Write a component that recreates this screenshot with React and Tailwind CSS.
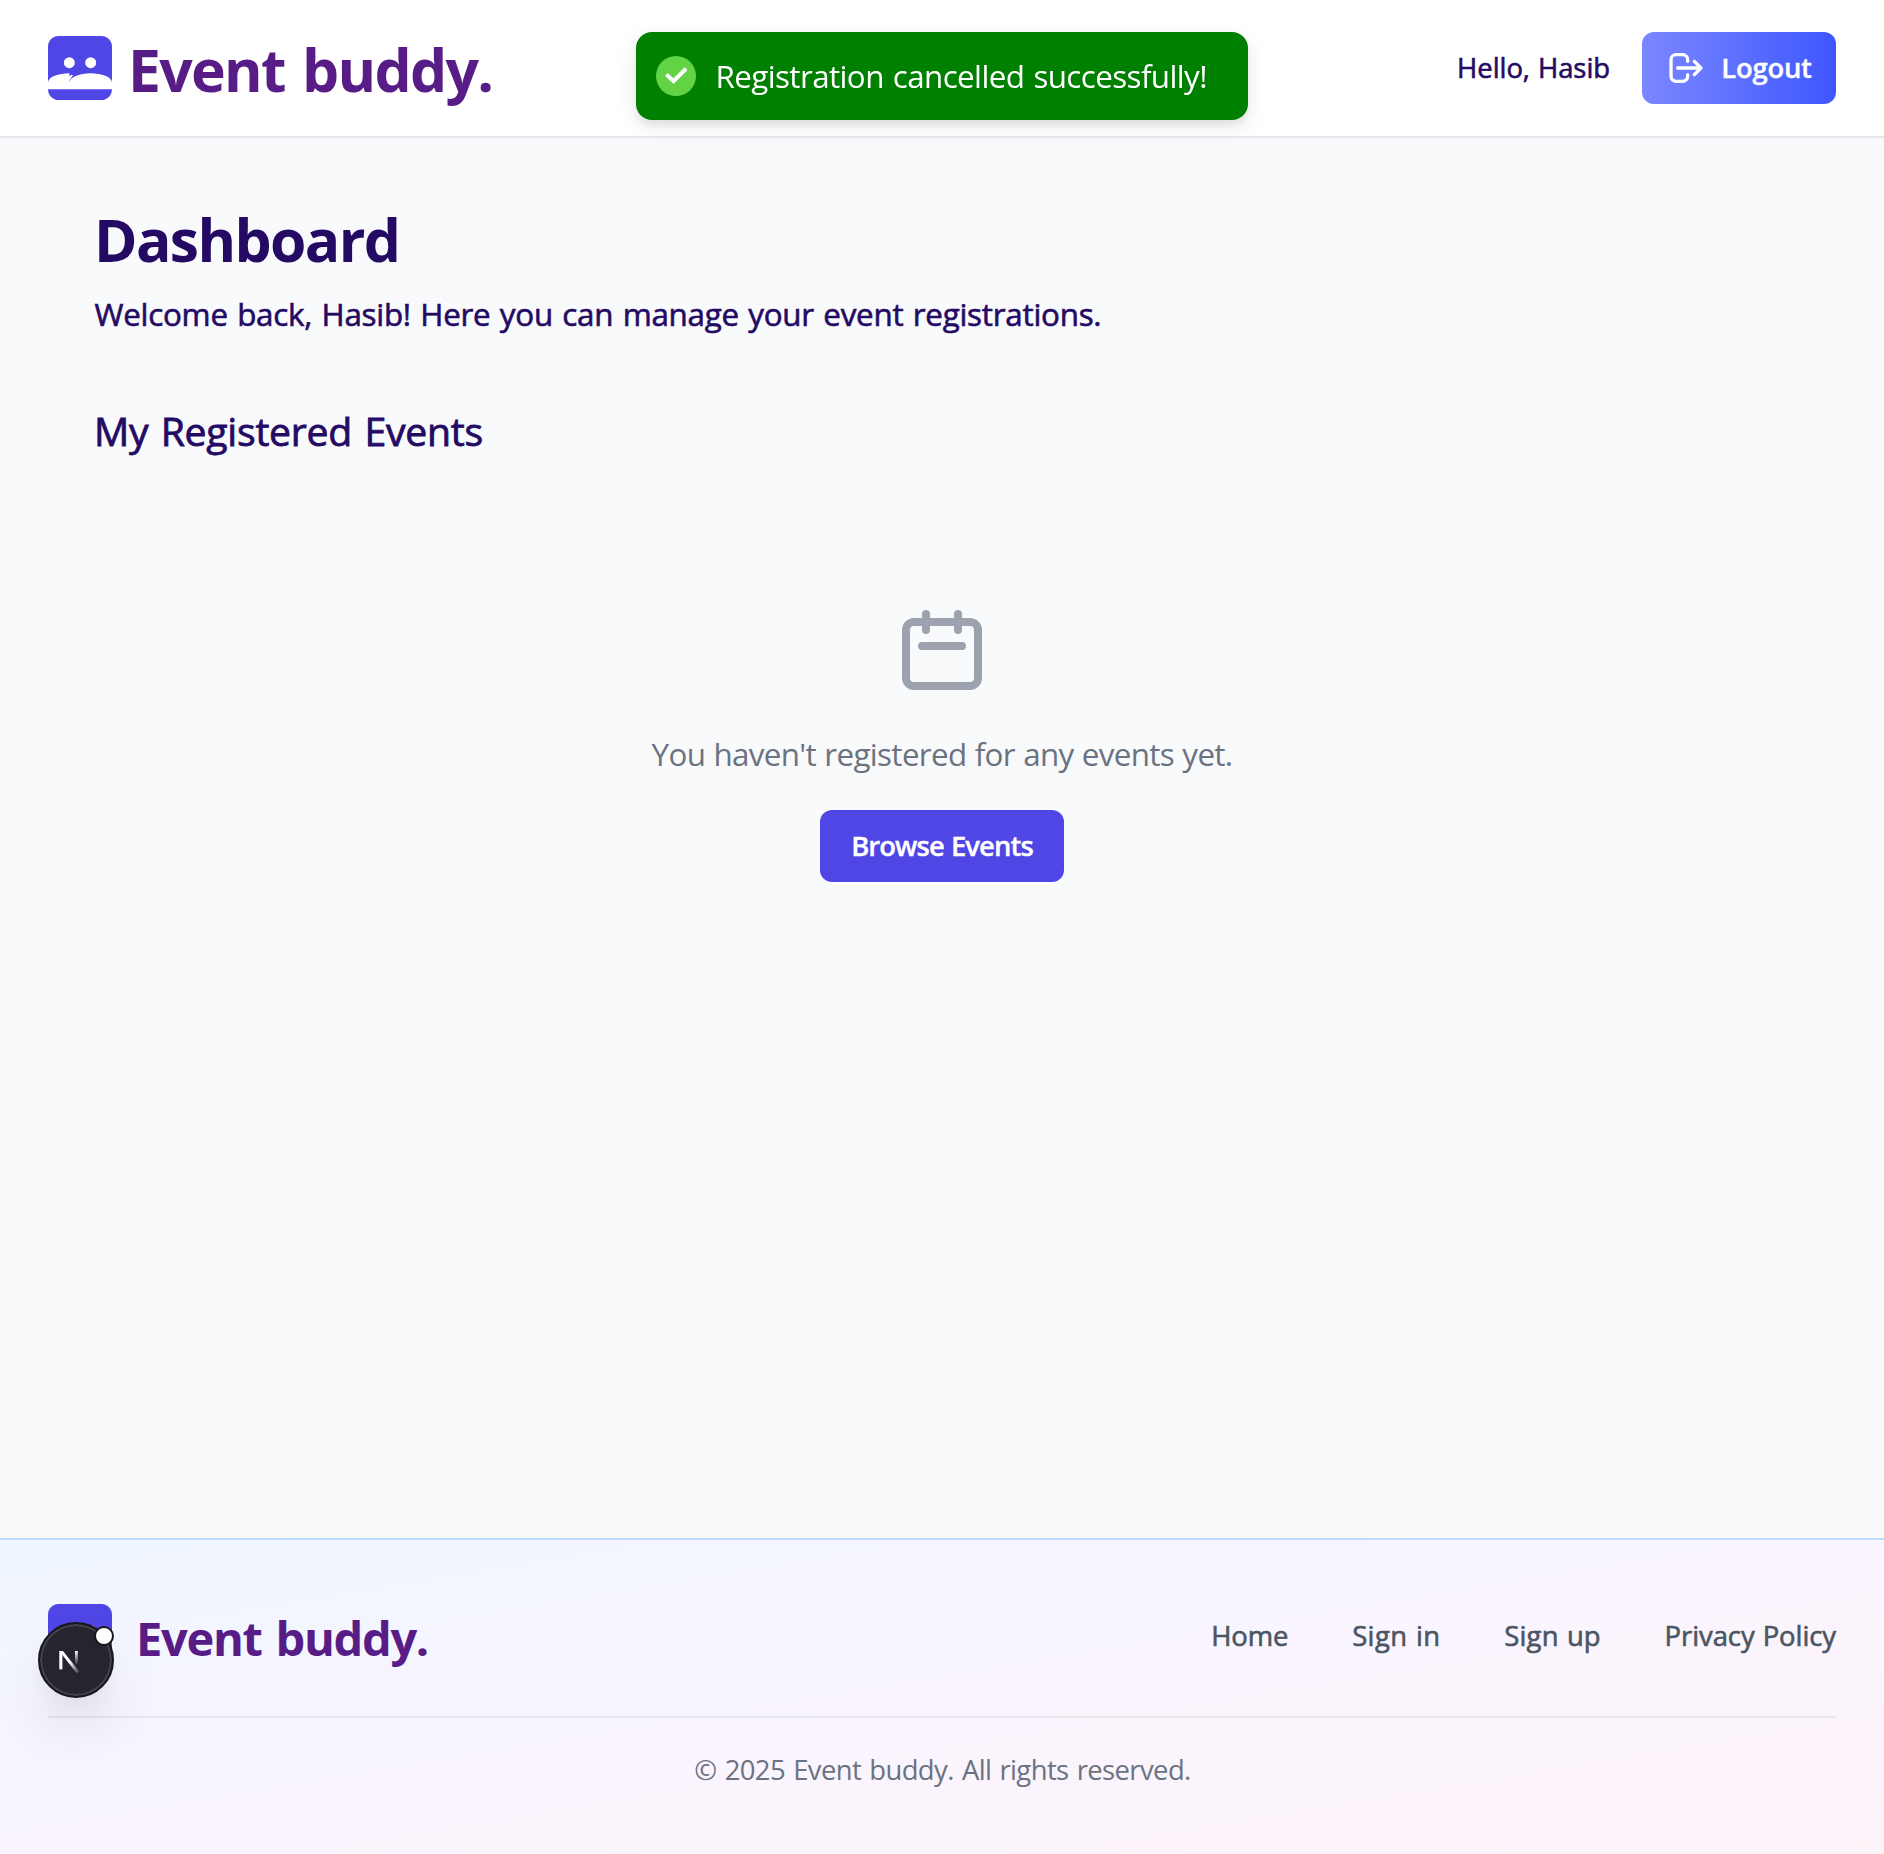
import React from "react";

function BuddyLogo() {
  return (
    <svg viewBox="0 0 24 24" className="size-16 shrink-0" aria-hidden="true">
      <rect width="24" height="24" rx="4" fill="#4f46e5" />
      <circle cx="8" cy="10" r="2.05" fill="#fff" />
      <circle cx="16" cy="10" r="2.05" fill="#fff" />
      <path
        fill="#fff"
        d="M8 14C4 14 0 15.4 0 17.4V20H24V17.4C24 15.4 20 14 16 14C12 14 8.3 15.5 8.1 17.2L8.05 16.6L9.4 14.65H8.6L8 15.1Z"
      />
    </svg>
  );
}

function LogoutIcon() {
  return (
    <svg viewBox="0 0 24 24" fill="none" stroke="currentColor" strokeWidth="2" strokeLinecap="round" strokeLinejoin="round" className="size-10 shrink-0" aria-hidden="true">
      <path d="M17 16l4-4m0 0l-4-4m4 4H7m6 4v1a3 3 0 01-3 3H6a3 3 0 01-3-3V7a3 3 0 013-3h4a3 3 0 013 3v1" />
    </svg>
  );
}

function CalendarIcon() {
  return (
    <svg viewBox="0 0 24 24" fill="none" stroke="currentColor" strokeWidth="2" strokeLinecap="round" strokeLinejoin="round" className="mt-[145px] size-24 text-[#9ca3af]" aria-hidden="true">
      <path d="M8 7V3m8 4V3m-9 8h10M5 21h14a2 2 0 002-2V7a2 2 0 00-2-2H5a2 2 0 00-2 2v12a2 2 0 002 2z" />
    </svg>
  );
}

function Toast() {
  return (
    <div
      role="status"
      className="fixed left-[636px] top-8 flex h-[88px] w-[612px] items-center rounded-2xl bg-[#008000] pl-5 text-white shadow-[0_6px_20px_rgba(0,0,0,0.1),0_6px_6px_rgba(0,0,0,0.05)]"
    >
      <svg viewBox="0 0 40 40" className="size-10 shrink-0" aria-hidden="true">
        <circle cx="20" cy="20" r="20" fill="#61d345" />
        <path d="M10.4 18.4L17.5 25.2L30.1 12.7" fill="none" stroke="#fff" strokeWidth="4" />
      </svg>
      <span className="-mt-px ml-[19.5px] whitespace-nowrap text-[31.36px] leading-[43px] tracking-[-0.6px] [word-spacing:1.5px]">
        Registration cancelled successfully!
      </span>
    </div>
  );
}

function DevBadge() {
  return (
    <div className="fixed left-[38px] top-[1622px] size-[76px] rounded-full border-2 border-[#171717] bg-[#26252f] shadow-[inset_0_0_0_2px_#45444d,0_32px_64px_-16px_rgba(0,0,0,0.24),0_16px_32px_-8px_rgba(0,0,0,0.05)]">
      <svg viewBox="40 1624 72 72" className="size-[72px]" aria-hidden="true">
        <defs>
          <linearGradient id="diagonalFade" gradientUnits="userSpaceOnUse" x1="70" y1="1662" x2="79" y2="1673">
            <stop stopColor="#fff" />
            <stop offset="1" stopColor="#fff" stopOpacity="0.1" />
          </linearGradient>
          <linearGradient id="stemFade" gradientUnits="userSpaceOnUse" x1="76" y1="1651" x2="76" y2="1665">
            <stop stopColor="#fff" />
            <stop offset="1" stopColor="#fff" stopOpacity="0" />
          </linearGradient>
        </defs>
        <rect x="59.3" y="1651" width="3.1" height="18.3" fill="#fff" />
        <path d="M59.3 1651H63L79.2 1671.4L76.8 1673.4Z" fill="url(#diagonalFade)" />
        <rect x="75" y="1651" width="2.8" height="14" fill="url(#stemFade)" />
      </svg>
      <span className="absolute left-[54px] top-[2px] size-5 rounded-full border-2 border-[#171717] bg-white" />
    </div>
  );
}

const footerLinks = [
  { label: "Home", tracking: "tracking-[-0.1px]" },
  { label: "Sign in", tracking: "tracking-[0.4px]" },
  { label: "Sign up", tracking: "tracking-[0.15px]" },
  { label: "Privacy Policy", tracking: "tracking-[-0.07px]" },
];

export default function App() {
  return (
    <div className="flex h-[1854px] flex-col overflow-hidden bg-[#f9fafc] font-['Open_Sans','Noto_Sans',sans-serif]">
      <header className="flex h-[138px] shrink-0 items-center justify-between border-b-2 border-gray-200 bg-white px-12">
        <div className="flex items-center gap-4">
          <BuddyLogo />
          <span className="pt-[2px] text-[58.8px] font-bold leading-[80px] tracking-[-1.7px] text-[#581c87] [word-spacing:3.6px]">
            Event buddy.
          </span>
        </div>
        <div className="flex items-center gap-8">
          <span className="-mt-px text-[27.44px] leading-[37px] tracking-[-0.05px] text-[#240a63] [-webkit-text-stroke:0.6px] [word-spacing:1px]">
            Hello, Hasib
          </span>
          <button className="flex h-[72px] w-[194px] items-center rounded-xl bg-linear-to-r from-[#7c86ff] to-[#3f55ff] pl-6 text-white">
            <LogoutIcon />
            <span className="-mt-px ml-[15.3px] text-[27.44px] font-semibold leading-[37px] tracking-[-0.25px] [-webkit-text-stroke:0.35px]">
              Logout
            </span>
          </button>
        </div>
      </header>

      <main className="flex grow flex-col px-[94px] pt-[61px] text-[#240a63]">
        <h1 className="text-[58.8px] font-bold leading-[80px] tracking-[-1.62px]">Dashboard</h1>
        <p className="mt-[13px] pl-[0.5px] text-[31.36px] leading-[43px] tracking-[-0.25px] [-webkit-text-stroke:0.6px] [word-spacing:1.5px]">
          Welcome back, Hasib! Here you can manage your event registrations.
        </p>
        <h2 className="mt-[69px] text-[39.2px] leading-[53px] tracking-[-0.26px] [-webkit-text-stroke:0.8px] [word-spacing:2.4px]">
          My Registered Events
        </h2>
        <section className="flex flex-col items-center">
          <CalendarIcon />
          <p className="mt-[34px] text-[31.36px] leading-[43px] tracking-[-0.65px] text-[#6b7280] [word-spacing:0.7px]">
            You haven't registered for any events yet.
          </p>
          <button className="mt-[35px] flex h-[72px] w-[244px] justify-center rounded-xl bg-[#4f46e5] pt-[17px] text-[27.44px] font-semibold leading-[37px] tracking-[-0.93px] text-white [-webkit-text-stroke:0.35px] [word-spacing:1px]">
            Browse Events
          </button>
        </section>
      </main>

      <footer className="h-[316px] shrink-0 border-t-2 border-[#bedbff] bg-linear-to-br from-[#eff6ff] via-[#faf5ff] to-[#fdf2f8] px-12 pt-16">
        <div className="flex h-16 items-start justify-between">
          <div className="flex items-start">
            <BuddyLogo />
            <span className="ml-6 mt-[2px] text-[47.04px] font-bold leading-[64px] tracking-[-1.3px] text-[#581c87] [word-spacing:2.8px]">
              Event buddy.
            </span>
          </div>
          <nav className="mt-[13px] flex gap-[63.8px] text-[27.44px] leading-[37px] text-[#4b5563] [-webkit-text-stroke:0.6px] [word-spacing:1px]">
            {footerLinks.map((link) => (
              <a key={link.label} href="#" className={link.tracking}>
                {link.label}
              </a>
            ))}
          </nav>
        </div>
        <div className="mt-12 border-t-2 border-gray-200 pl-px pt-[33px] text-center text-[27.44px] leading-[37px] tracking-[-0.6px] text-[#6b7280] [word-spacing:1.6px]">
          © 2025 Event buddy. All rights reserved.
        </div>
      </footer>

      <Toast />
      <DevBadge />
    </div>
  );
}
